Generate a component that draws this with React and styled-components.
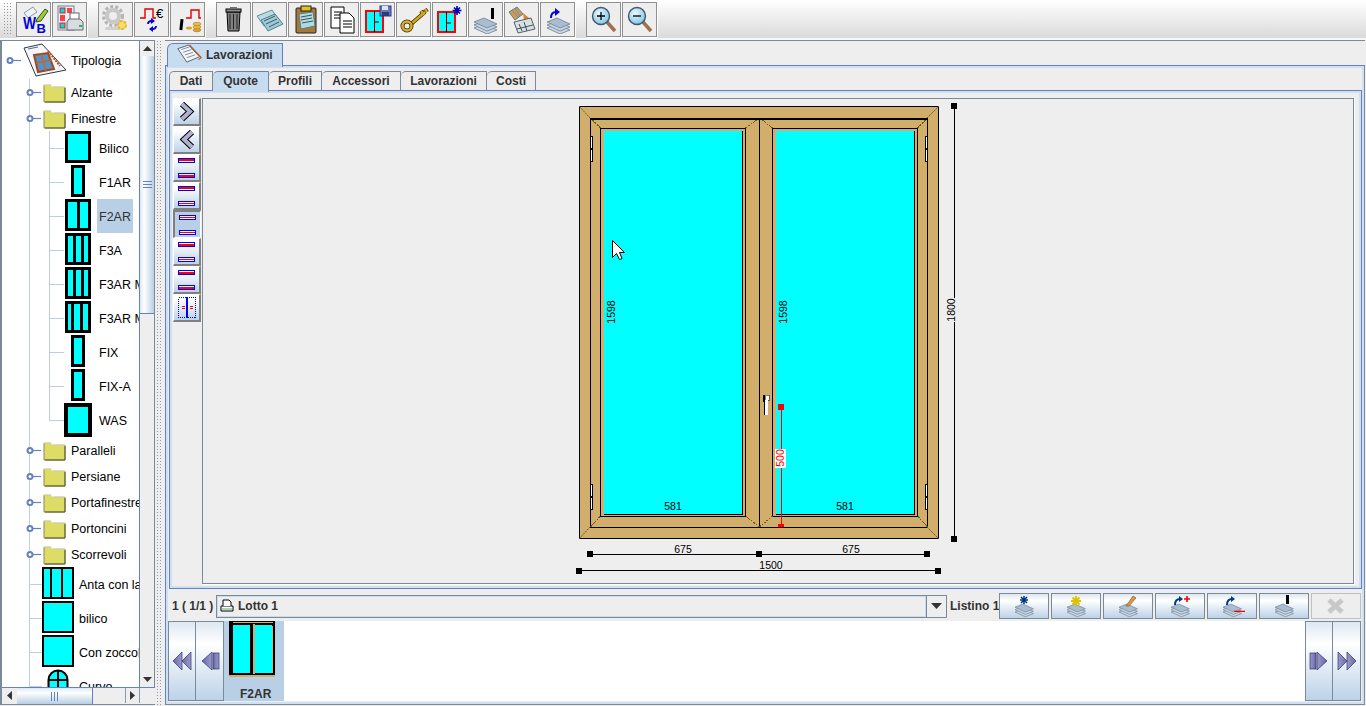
import styled, { createGlobalStyle } from 'styled-components'

const GlobalStyle = createGlobalStyle`
	html, body { margin: 0; padding: 0; background: #eeeeee; }
	body { font-family: "Liberation Sans", Arial, sans-serif; overflow: hidden; }
	svg { display: block; flex: none; }
`

const Page = styled.div`
	width: 1366px;
	height: 706px;
	display: flex;
	flex-direction: column;
	background: #eeeeee;
	overflow: hidden;
`

/* ---------- toolbar ---------- */
const Toolbar = styled.div`
	height: 38px;
	display: flex;
	align-items: center;
	gap: 11px;
	border-bottom: 2px solid #f8f8f8;
	background: linear-gradient(#ffffff, #f2f2f2 35%, #dadada);
`
const Gripper = styled.div`
	width: 9px;
	height: 34px;
	margin: 0 -7px 0 3px;
	background-image: radial-gradient(#9a9a9a 0.7px, transparent 0.9px);
	background-size: 3px 3px;
`
const ToolGroup = styled.div`
	display: flex;
	gap: 1px;
`
const ToolBtn = styled.div`
	width: 33px;
	height: 33px;
	border: 1px solid #8f8f8f;
	box-shadow: 1px 1px 0 #ffffff;
	background: #eeeeee;
	display: flex;
	align-items: center;
	justify-content: center;
`

/* ---------- body ---------- */
const Body = styled.div`
	flex: 1;
	display: flex;
	min-height: 0;
	padding-bottom: 1px;
`
const TreePane = styled.div`
	width: 153px;
	display: flex;
	flex-direction: column;
	border-left: 2px solid #7a8a99;
	border-top: 1px solid #7a8a99;
	border-bottom: 1px solid #7a8a99;
`
const TreeArea = styled.div`
	flex: 1;
	display: flex;
	min-height: 0;
`
const TreeView = styled.div`
	flex: 1;
	position: relative;
	background: #ffffff;
	overflow: hidden;
	min-width: 0;
	&::before {
		content: '';
		position: absolute;
		left: 27px;
		top: 38px;
		bottom: 0;
		width: 1px;
		background: #b8cfe5;
	}
`
const TreeGroup = styled.div`
	position: relative;
	&::before {
		content: '';
		position: absolute;
		left: 47px;
		top: 0;
		bottom: 17px;
		width: 1px;
		background: #b8cfe5;
	}
`
const TreeRow = styled.div`
	position: relative;
	height: ${p => p.$h}px;
	display: flex;
	align-items: center;
	padding-left: ${p => p.$left}px;
	white-space: nowrap;
`
const Branch = styled.span`
	width: ${p => p.$w}px;
	height: 1px;
	flex: none;
	background: #b8cfe5;
`
const IconSlot = styled.span`
	width: ${p => p.$w}px;
	flex: none;
	display: flex;
	justify-content: center;
	align-self: ${p => (p.$top ? 'flex-start' : 'center')};
`
const TreeLabel = styled.span`
	font-size: 12.5px;
	margin-left: ${p => p.$gap}px;
	padding: 0 2px;
	height: ${p => (p.$selected ? 34 : 14)}px;
	line-height: ${p => (p.$selected ? 36 : 16)}px;
	background: ${p => (p.$selected ? '#b8cfe5' : 'transparent')};
	color: ${p => (p.$selected ? '#333333' : '#000000')};
`
const VScroll = styled.div`
	width: 16px;
	box-sizing: border-box;
	flex: none;
	border-left: 1px solid #6382bf;
	border-right: 1px solid #7a8a99;
	display: flex;
	flex-direction: column;
	background: #eeeeee;
`
const ScrollArrow = styled.div`
	width: ${p => p.$w || 15}px;
	height: ${p => p.$h || 15}px;
	flex: none;
	display: flex;
	align-items: center;
	justify-content: center;
	background: #eeeeee;
	border: solid #8a9aa8;
	border-width: ${p => p.$edges || '0'};
	box-sizing: border-box;
`
const VThumb = styled.div`
	height: 258px;
	flex: none;
	box-sizing: border-box;
	border-bottom: 1px solid #6382bf;
	background: linear-gradient(90deg, #dde8f3, #ffffff 30%, #b8cfe5);
	display: flex;
	flex-direction: column;
	justify-content: center;
	gap: 2px;
	align-items: center;
`
const GripLine = styled.span`
	width: 9px;
	height: 1px;
	background: #6382bf;
`
const TrackFill = styled.div`
	flex: 1;
`
const HScroll = styled.div`
	height: 16px;
	flex: none;
	display: flex;
	border-top: 1px solid #6382bf;
	background: #eeeeee;
`
const HThumb = styled.div`
	width: 76px;
	flex: none;
	box-sizing: border-box;
	border-right: 1px solid #6382bf;
	background: linear-gradient(#dde8f3, #ffffff 30%, #b8cfe5);
	display: flex;
	align-items: center;
	justify-content: center;
	gap: 2px;
`
const GripBar = styled.span`
	width: 1px;
	height: 9px;
	background: #6382bf;
`
const Splitter = styled.div`
	width: 10px;
	background-color: #eeeeee;
	background-image: radial-gradient(#9a9a9a 0.7px, transparent 0.9px);
	background-size: 3px 3px;
	background-position: 1px 0;
	background-clip: content-box;
	box-sizing: border-box;
	padding: 0 2px;
`

/* ---------- main ---------- */
const Main = styled.div`
	flex: 1;
	min-width: 0;
	display: flex;
	flex-direction: column;
	border-top: 1px solid #7a8a99;
	margin-right: 1px;
`
const TopTabs = styled.div`
	height: 24px;
	flex: none;
	display: flex;
	align-items: flex-end;
	padding-left: 2px;
	position: relative;
	z-index: 1;
`
const OuterTab = styled.div`
	width: 116px;
	height: 24px;
	margin-bottom: -2px;
	border: 1px solid #6382bf;
	border-bottom: 0;
	border-top-left-radius: 6px;
	background: #c8dcf0;
	display: flex;
	align-items: center;
	gap: 3px;
	padding: 0 0 2px 8px;
	box-sizing: border-box;
	font-size: 12px;
	font-weight: bold;
	color: #333333;
`
const OuterPanel = styled.div`
	flex: 1;
	min-height: 0;
	display: flex;
	flex-direction: column;
	border: 1px solid;
	border-color: #6382bf #7a8a99 #7a8a99 #6382bf;
	box-shadow: inset 0 0 0 2px #d0e0f2;
	padding: 5px 2px 3px 3px;
`
const InnerTabs = styled.div`
	height: 19px;
	flex: none;
	display: flex;
	position: relative;
	z-index: 1;
`
const InnerTab = styled.div`
	width: ${p => p.$w}px;
	height: ${p => (p.$active ? 21 : 19)}px;
	box-sizing: border-box;
	border: 1px solid #7a8a99;
	border-bottom: 0;
	border-left-width: ${p => (p.$first ? 1 : 0)}px;
	border-top-left-radius: 5px;
	background: ${p => (p.$active ? '#c8dcf0' : '#eeeeee')};
	border-top-color: ${p => (p.$active ? '#6382bf' : '#7a8a99')};
	padding-bottom: ${p => (p.$active ? 2 : 0)}px;
	display: flex;
	align-items: center;
	justify-content: center;
	font-size: 12px;
	font-weight: bold;
	color: #333333;
`
const InnerPanel = styled.div`
	flex: 1;
	min-height: 0;
	display: flex;
	gap: 1px;
	border: 1px solid #6382bf;
	box-shadow: inset 0 0 0 2px #d0e0f2;
	padding: 7px 7px 4px 3px;
`
const SideBar = styled.div`
	width: 28px;
	flex: none;
	display: flex;
	flex-direction: column;
`
const SideBtn = styled.div`
	height: 28px;
	flex: none;
	box-sizing: border-box;
	border-style: solid;
	border-width: ${p => (p.$active ? '2px 1px 1px 2px' : '1px 2px 2px 1px')};
	border-color: ${p => (p.$active
		? '#808080 #ffffff #ffffff #808080'
		: '#ffffff #808080 #808080 #ffffff')};
	background: ${p => (p.$active ? '#b8cfe5' : 'linear-gradient(#ffffff 15%, #bcd2e8)')};
	display: flex;
	align-items: center;
	justify-content: center;
`
const Canvas = styled.div`
	flex: 1;
	min-width: 0;
	border: 1px solid #7a8a99;
	box-shadow: 1px 1px 0 #ffffff;
	background: #eeeeee;
	overflow: hidden;
`
const BottomBar = styled.div`
	height: 28px;
	flex: none;
	margin-top: 3px;
	display: flex;
	align-items: center;
	font-size: 12px;
	font-weight: bold;
	color: #333333;
`
const Counter = styled.span`
	width: 44px;
	padding-left: 3px;
	flex: none;
	white-space: pre;
`
const Combo = styled.div`
	flex: 1;
	height: 23px;
	display: flex;
	align-items: center;
	border: 1px solid #7a8a99;
	box-shadow: inset 1px 1px 0 #c8dcf0, inset -1px -1px 0 #c8dcf0;
	box-sizing: border-box;
	padding-left: 3px;
	gap: 4px;
`
const ComboText = styled.span`
	flex: 1;
`
const ComboArrow = styled.div`
	width: 20px;
	height: 23px;
	flex: none;
	box-sizing: border-box;
	border: 1px solid #7a8a99;
	border-left: 0;
	background: #eeeeee;
	display: flex;
	align-items: center;
	justify-content: center;
`
const PriceLabel = styled.span`
	width: 49px;
	margin-left: 3px;
	flex: none;
	white-space: nowrap;
`
const ActionRow = styled.div`
	display: flex;
	gap: 2px;
	padding-right: 1px;
	flex: none;
`
const ActionBtn = styled.div`
	width: 50px;
	height: 26px;
	box-sizing: border-box;
	border: 1px solid ${p => (p.$off ? '#c0c0c0' : '#7a8a99')};
	background: ${p => (p.$off ? '#eeeeee' : 'linear-gradient(#dde8f3, #ffffff 28%, #bcd2e8)')};
	display: flex;
	align-items: center;
	justify-content: center;
`
const Strip = styled.div`
	height: 80px;
	flex: none;
	margin: 1px 1px 0 -1px;
	display: flex;
	background: #ffffff;
`
const NavBtn = styled.div`
	width: 28px;
	flex: none;
	box-sizing: border-box;
	border: 1px solid #7a8a99;
	border-left-width: ${p => (p.$joined ? 0 : 1)}px;
	background: linear-gradient(#dde8f3, #ffffff 28%, #bcd2e8);
	display: flex;
	align-items: center;
	justify-content: center;
`
const Tile = styled.div`
	width: 60px;
	box-sizing: border-box;
	padding-left: 5px;
	background: #b8cfe5;
	display: flex;
	flex-direction: column;
	align-items: flex-start;
	font-size: 12px;
	font-weight: bold;
	color: #333333;
`
const TileLabel = styled.span`
	margin: 10px 0 0 11px;
`
const StripFill = styled.div`
	flex: 1;
`

/* ---------- drawings ---------- */
const Step = ({ x, y, c = '#ff0000', s = 1 }) => (
	<path d={`M${x} ${y + 8 * s}H${x + 4 * s}V${y}H${x + 10 * s}V${y + 8 * s}H${x + 7 * s}`} fill="none" stroke={c} strokeWidth="1.4" />
)

const Layers = ({ x = 0, y = 0, n = 3, s = 1 }) => (
	<g transform={`translate(${x} ${y}) scale(${s})`}>
		{[...Array(n).keys()].reverse().map(i => (
			<path key={i} d={`M0 ${4 + i * 3}L10 ${i * 3}L23 ${6 + i * 3}L13 ${10 + i * 3}Z`} fill={i === 0 ? '#a8bdd2' : '#c6d6e4'} stroke="#6f7f90" strokeWidth="0.8" />
		))}
	</g>
)

const Svg30 = ({ children }) => <svg width="30" height="30" viewBox="0 0 30 30">{children}</svg>

const LensDefs = () => (
	<defs>
		<radialGradient id="lens" cx="0.4" cy="0.35" r="0.7">
			<stop offset="0" stopColor="#e8f8ff" />
			<stop offset="1" stopColor="#7cc4e4" />
		</radialGradient>
	</defs>
)

const toolIcons = [
	<Svg30>
		<path d="M5 9L14 3l4 5-9 6Z" fill="#eef2f5" stroke="#8a9aa8" />
		<path d="M18 15L26 5l3 2-7 10-5 1Z" fill="#9acd32" stroke="#222" strokeWidth="0.8" />
		<text x="4" y="25" fontSize="17" fontWeight="bold" fill="#0000e0" fontFamily="Liberation Sans" textLength="13" lengthAdjust="spacingAndGlyphs">W</text>
		<text x="17.5" y="29" fontSize="13" fontWeight="bold" fill="#0000e0" fontFamily="Liberation Sans">B</text>
	</Svg30>,
	<Svg30>
		<rect x="3" y="2" width="16" height="24" fill="#e8f0f8" stroke="#7080a0" />
		<rect x="5" y="4" width="5" height="5" fill="#00dddd" stroke="#d02020" />
		<rect x="12" y="4" width="5" height="5" fill="#ff4040" />
		<rect x="5" y="11" width="5" height="6" fill="#ff4040" />
		<rect x="5" y="19" width="5" height="5" fill="#00dddd" stroke="#d02020" />
		<rect x="15" y="9" width="9" height="7" fill="#fff" stroke="#606870" />
		<path d="M14 15h11l3 3v8H12v-8Z" fill="#d8dce0" stroke="#606870" />
		<rect x="24" y="21" width="3" height="2" fill="#20c040" />
	</Svg30>,
	<Svg30>
		<circle cx="12" cy="12" r="6" fill="none" stroke="#c8c8c8" strokeWidth="4" />
		<circle cx="12" cy="12" r="9.5" fill="none" stroke="#b4b4b4" strokeWidth="3" strokeDasharray="3 2.2" />
		<rect x="4" y="23" width="16" height="3" rx="1.5" fill="#d0d0d0" />
		<circle cx="21" cy="21" r="4" fill="#f4e070" stroke="#e8b830" strokeWidth="2" strokeDasharray="3 1" />
	</Svg30>,
	<Svg30>
		<path d="M3 14H8V5H16V14H19" fill="none" stroke="#e00000" strokeWidth="1.4" />
		<text x="19" y="14" fontSize="13" fontFamily="Liberation Sans" fill="#000">€</text>
		<path d="M11 20c0-2 2-3 4-3" fill="none" stroke="#0000e0" strokeWidth="1.8" />
		<path d="M14 14l4 3-4 3Z" fill="#0000e0" />
		<path d="M19 22c0 2-2 3-4 3" fill="none" stroke="#0000e0" strokeWidth="1.8" />
		<path d="M16 22l-4 3 4 3Z" fill="#0000e0" />
	</Svg30>,
	<Svg30>
		<path d="M13 14H18V6H26V14H28" fill="none" stroke="#e00000" strokeWidth="1.4" />
		<rect x="7" y="15" width="3" height="11" fill="#000" transform="rotate(6 8 20)" />
		<ellipse cx="16" cy="24" rx="3" ry="1.5" fill="#e0a030" />
		<ellipse cx="24" cy="26" rx="4" ry="1.8" fill="#e0a030" stroke="#a07020" strokeWidth="0.5" />
		<ellipse cx="24" cy="23" rx="4" ry="1.8" fill="#e8b840" stroke="#a07020" strokeWidth="0.5" />
		<ellipse cx="24" cy="20" rx="4" ry="1.8" fill="#e8b840" stroke="#a07020" strokeWidth="0.5" />
	</Svg30>,
	<Svg30>
		<path d="M8 8h13l-1 19H9Z" fill="#808080" stroke="#000" />
		<path d="M11 10v15M14.500 10v15M18 10v15" stroke="#222" />
		<rect x="7" y="5" width="15" height="3" fill="#909090" stroke="#000" />
		<rect x="11" y="3" width="7" height="2" fill="#707070" />
	</Svg30>,
	<Svg30>
		<path d="M2 12L17 6l6 9-14 7Z" fill="#b8dce0" stroke="#6090a0" />
		<path d="M6 16L20 10l8 10-15 7Z" fill="#9ccbd4" stroke="#508090" />
		<path d="M9 17l11-5M11 20l11-5M14 23l10-5" stroke="#405868" />
	</Svg30>,
	<Svg30>
		<rect x="5" y="4" width="20" height="25" rx="1" fill="#a87838" stroke="#222" />
		<rect x="10" y="2" width="10" height="5" fill="#e8c020" stroke="#222" />
		<path d="M8 10L22 8l2 14-14 3Z" fill="#b0dce0" stroke="#508090" />
		<path d="M10 13l11-2M10 16l11-2M11 19l11-2" stroke="#405060" />
	</Svg30>,
	<Svg30>
		<path d="M4 3h13v21H4Z" fill="#fff" stroke="#000" />
		<path d="M7 8h8M7 11h8M7 14h8" stroke="#000" />
		<path d="M13 9h9l5 5v15H13Z" fill="#fff" stroke="#000" />
		<path d="M16 17h9M16 20h9M16 23h9" stroke="#000" />
	</Svg30>,
	<Svg30>
		<rect x="3" y="7" width="17" height="21" fill="#00ffff" stroke="#ff0000" strokeWidth="2" />
		<path d="M11.500 7v21M12 18h4" stroke="#000" />
		<rect x="17" y="2" width="11" height="10" fill="#6a78c0" stroke="#303880" />
		<rect x="19" y="2" width="6" height="4" fill="#dfe4f2" />
		<rect x="19" y="8" width="7" height="4" fill="#303880" />
	</Svg30>,
	<Svg30>
		<path d="M12 20L26 8M22 7l3 4M26 5l2 3" stroke="#403000" strokeWidth="4" />
		<path d="M12 20L26 8M22 7l3 4M26 5l2 3" stroke="#d0a820" strokeWidth="2.4" />
		<circle cx="8" cy="22" r="4.5" fill="none" stroke="#403000" strokeWidth="4" />
		<circle cx="8" cy="22" r="4.5" fill="none" stroke="#d8b030" strokeWidth="2.4" />
	</Svg30>,
	<Svg30>
		<rect x="3" y="8" width="17" height="20" fill="#00ffff" stroke="#ff0000" strokeWidth="2" />
		<path d="M11.500 8v20M12 19h4" stroke="#000" />
		<path d="M22 2v9M17.500 6.500h9M19 3.500l6 6M25 3.500l-6 6" stroke="#0000c0" strokeWidth="1.6" />
	</Svg30>,
	<Svg30>
		<Layers x="3" y="14" />
		<Step x="5" y="5" />
		<rect x="20" y="4" width="3" height="11" fill="#000" />
	</Svg30>,
	<Svg30>
		<path d="M2 8L10 3l6 7-8 6Z" fill="#d89848" stroke="#5080a0" />
		<path d="M5 6l6 7M8 4l5 8" stroke="#6090c0" />
		<path d="M16 9l6 5-5 2Z" fill="#e08020" />
		<path d="M7 18L24 14l4 11-17 4Z" fill="#d8e0e0" stroke="#506070" />
		<path d="M12 20l3 7M17 18l3 9M10 25l16-4" stroke="#405060" />
	</Svg30>,
	<Svg30>
		<Layers x="4" y="14" />
		<path d="M8 14c0-4 2-6 5-6" fill="none" stroke="#0000e0" strokeWidth="2" />
		<path d="M12 4l5 4-5 4Z" fill="#0000e0" />
		<Step x="18" y="4" s={0.8} />
	</Svg30>,
	<Svg30>
		<LensDefs />
		<path d="M18 18l8 9" stroke="#a07050" strokeWidth="3.500" />
		<circle cx="12" cy="12" r="8.500" fill="url(#lens)" stroke="#405868" strokeWidth="1.400" />
		<path d="M8 12h8M12 8v8" stroke="#000" strokeWidth="1.300" />
	</Svg30>,
	<Svg30>
		<path d="M18 18l8 9" stroke="#a07050" strokeWidth="3.500" />
		<circle cx="12" cy="12" r="8.500" fill="url(#lens)" stroke="#405868" strokeWidth="1.400" />
		<path d="M8 12h8" stroke="#000" strokeWidth="1.300" />
	</Svg30>,
]

const Knob = () => (
	<svg width="15" height="9" viewBox="0 0 15 9">
		<circle cx="4" cy="4.5" r="2.5" fill="#ffffff" stroke="#6382bf" strokeWidth="2" />
		<path d="M7 4.5H15" stroke="#6382bf" strokeWidth="1.2" />
	</svg>
)

const Folder = () => (
	<svg width="23" height="21" viewBox="0 0 23 21">
		<path d="M1 3h7l2 2h12v15H1Z" fill="#dcdc66" stroke="#8a8a50" />
		<path d="M1 3h7l2 2h12" fill="none" stroke="#f4f4c8" />
		<path d="M22 6v14H2" fill="none" stroke="#5a5a28" />
	</svg>
)

const BookIcon = () => (
	<svg width="44" height="34" viewBox="0 0 44 34">
		<path d="M1 5L19 1 43 27 13 33Z" fill="#f4f6fa" stroke="#303848" />
		<path d="M11 12L25 10 31 26 15 29Z" fill="#5890c8" stroke="#a04818" strokeWidth="2" />
		<path d="M18 11l5 17M13 20l16-3" stroke="#c06828" strokeWidth="1.4" />
		<path d="M25 8l12 15" stroke="#c05020" strokeWidth="2" strokeDasharray="2 1" />
		<path d="M5 6l10-2" stroke="#5068a0" />
	</svg>
)

const PaneThumb = ({ w, h, b = 3, bars = [] }) => (
	<svg width={w} height={h} viewBox={`0 0 ${w} ${h}`} shapeRendering="crispEdges">
		<rect width={w} height={h} fill="#000" />
		<rect x={b} y={b} width={w - 2 * b} height={h - 2 * b} fill="#00ffff" />
		{bars.map(x => <rect key={x} x={x} y="0" width={b} height={h} fill="#000" />)}
	</svg>
)

const ArchThumb = () => (
	<svg width="22" height="34" viewBox="0 0 22 34">
		<path d="M1.5 33V11a9.5 9.5 0 0 1 19 0V33Z" fill="#00ffff" stroke="#000" strokeWidth="2" />
		<path d="M2 11H20M11 2V33" stroke="#000" strokeWidth="2" />
	</svg>
)

const NodeLeaf = ({ thumb, label, selected, deep }) => (
	<TreeRow $h={34} $left={deep ? 47 : 27}>
		<Branch $w={deep ? 15 : 13} />
		<IconSlot $top $w={deep ? 28 : 32}>{thumb}</IconSlot>
		<TreeLabel $gap={deep ? 5 : 3} $selected={selected}>{label}</TreeLabel>
	</TreeRow>
)

const NodeFolder = ({ label }) => (
	<TreeRow $h={26} $left={24}>
		<Knob />
		<IconSlot $w={27}><Folder /></IconSlot>
		<TreeLabel $gap={1}>{label}</TreeLabel>
	</TreeRow>
)

const Tri = ({ d, w = 9, h = 5 }) => {
	const pts = {
		up: `0,${h} ${w},${h} ${w / 2},0`,
		down: `0,0 ${w},0 ${w / 2},${h}`,
		left: `${h},0 ${h},${w} 0,${w / 2}`,
		right: `0,0 0,${w} ${h},${w / 2}`,
	}[d]
	const vert = d === 'up' || d === 'down'
	return (
		<svg width={vert ? w : h} height={vert ? h : w}>
			<polygon points={pts} fill="#333333" />
		</svg>
	)
}

const Chevron = ({ flip }) => (
	<svg width="16" height="21" viewBox="0 0 16 21">
		<g transform={flip ? 'matrix(-1 0 0 1 16 0)' : undefined}>
			<polyline points="3,3 11,10.500 3,18" fill="none" stroke="#000" strokeWidth="6" />
			<polyline points="3,3 11,10.500 3,18" fill="none" stroke="#b0b0d0" strokeWidth="4" />
		</g>
	</svg>
)

// a blue sash bar with the red measured edge: at its top, middle or low side
const BarIcon = ({ top, bottom }) => {
	const bar = (y, kind) => (
		<g key={y}>
			<rect x="0" y={y} width="17" height="5" fill="#0000ff" />
			<rect x="1" y={y + 1} width="15" height="3" fill="#eef3f8" />
			{kind === 'top' && <rect x="1" y={y + 1} width="15" height="2" fill="#ff0000" />}
			{kind === 'mid' && <rect x="1" y={y + 2} width="15" height="1" fill="#ff0000" />}
			{kind === 'low' && <rect x="1" y={y + 2} width="15" height="2" fill="#ff0000" />}
		</g>
	)
	return (
		<svg width="17" height="21" viewBox="0 0 17 21" shapeRendering="crispEdges">
			{bar(1, top)}
			{bar(16, bottom)}
		</svg>
	)
}

const SplitIcon = () => (
	<svg width="18" height="21" viewBox="0 0 18 21" shapeRendering="crispEdges">
		<rect x="0.5" y="0.5" width="17" height="20" fill="none" stroke="#0000ff" strokeDasharray="1 1" />
		<rect x="8" y="0" width="2" height="21" fill="#0000ff" />
		<path d="M4 9.500h3M4 11.500h3M12 9.500h3M12 11.500h3" stroke="#ff0000" />
	</svg>
)

const NavDefs = () => (
	<svg width="0" height="0">
		<defs>
			<linearGradient id="navg" x1="0" x2="1">
				<stop offset="0" stopColor="#9a9ad0" />
				<stop offset="1" stopColor="#6a6aa0" />
			</linearGradient>
		</defs>
	</svg>
)

const Pair = ({ flip, bar }) => (
	<svg width="22" height="24" viewBox="0 0 22 24">
		<g transform={flip ? 'matrix(-1 0 0 1 22 0)' : undefined} stroke="#30306a" strokeWidth="0.7" fill="url(#navg)">
			{bar && <rect x="2" y="4" width="6" height="16" />}
			{bar && <polygon points="9,3 19,12 9,21" />}
			{!bar && <polygon points="2,3 11,12 2,21" />}
			{!bar && <polygon points="11,3 20,12 11,21" />}
		</g>
	</svg>
)

const PrinterSmall = () => (
	<svg width="14" height="14" viewBox="0 0 14 14">
		<path d="M1 7h12v5H1Z" fill="#fff" stroke="#000" />
		<path d="M3 7V1h6l2 2v4" fill="#fff" stroke="#000" />
		<path d="M2 10h10" stroke="#60a060" />
	</svg>
)

const ActionIcon = ({ kind }) => (
	<svg width="26" height="22" viewBox="0 0 26 22">
		<Layers x="4" y="9" s={0.8} />
		{kind === 0 && <path d="M13 1v8M9 5h8M10 2l6 6M16 2l-6 6" stroke="#003a80" strokeWidth="1.500" />}
		{kind === 1 && <path d="M13 1v10M8 6h10M9.500 2.500l7 7M16.500 2.500l-7 7" stroke="#e0c000" strokeWidth="2" />}
		{kind === 2 && <path d="M11 11L18 1l3 2-7 8Z" fill="#e09840" stroke="#805020" strokeWidth="0.6" />}
		{kind === 3 && <>
			<path d="M8 10c0-4 2-6 5-6" fill="none" stroke="#003a80" strokeWidth="2" />
			<path d="M12 1l4 3-4 3Z" fill="#003a80" />
			<path d="M17 4h6M20 1v6" stroke="#ff0000" strokeWidth="1.600" />
		</>}
		{kind === 4 && <>
			<path d="M8 10c0-4 2-6 5-6" fill="none" stroke="#003a80" strokeWidth="2" />
			<path d="M12 1l4 3-4 3Z" fill="#003a80" />
			<Step x="15" y="1" s={0.8} />
		</>}
		{kind === 5 && <>
			<Step x="5" y="2" s={0.8} />
			<rect x="15" y="0" width="3" height="9" fill="#000" />
		</>}
	</svg>
)

const OffIcon = () => (
	<svg width="20" height="18" viewBox="0 0 20 18">
		<path d="M3 3L16 15M16 3L3 15" stroke="#c8c8c8" strokeWidth="5" />
	</svg>
)

const StripThumb = () => (
	<svg width="46" height="56" viewBox="0 0 46 56" shapeRendering="crispEdges">
		<rect width="46" height="56" fill="#d2ae6d" />
		<rect x="0" y="0" width="46" height="1" fill="#000" />
		<rect x="0" y="1" width="4" height="54" fill="#000" />
		<rect x="0" y="2" width="46" height="3" fill="#000" />
		<rect x="0" y="52" width="46" height="2" fill="#000" />
		<rect x="21" y="3" width="3" height="50" fill="#000" />
		<rect x="44" y="1" width="2" height="54" fill="#000" />
		<rect x="4" y="4" width="17" height="48" fill="#00ffff" />
		<rect x="26" y="4" width="17" height="48" fill="#00ffff" />
		<rect x="24" y="3" width="2" height="50" fill="#d2ae6d" />
		<rect x="0" y="54" width="46" height="2" fill="#d2ae6d" />
	</svg>
)

const OuterTabIcon = () => (
	<svg width="27" height="21" viewBox="0 0 30 23">
		<path d="M2 5L14 1l12 13-14 6Z" fill="#f2f4f8" stroke="#505868" />
		<path d="M6 6l9-3M8 9l9-3M10 12l9-3M12 15l9-3" stroke="#7088a8" />
		<path d="M15 1l13 14-3 2" fill="none" stroke="#b06030" strokeWidth="1.400" />
	</svg>
)

/* dimensioning of the drawing, in page coordinates */
const Handle = ({ x, y, c = '#000' }) => <rect x={x - 3} y={y - 3} width="6" height="6" fill={c} />

const Dim = ({ x, y, children }) => (
	<text x={x} y={y} fontSize="10.5" textAnchor="middle" fontFamily="Liberation Sans" fill="#000">{children}</text>
)
const DimV = ({ x, y, children, c = '#000' }) => (
	<text x={x} y={y} fontSize="10.5" textAnchor="middle" fontFamily="Liberation Sans" fill={c} transform={`rotate(-90 ${x} ${y})`}>{children}</text>
)

const Sash = ({ x1, x2, cx1, cx2, bx1, bx2 }) => (
	<g>
		<rect x={x1} y="118" width={x2 - x1} height="409" fill="#d2ae6d" stroke="#000" />
		<rect x={bx1} y="128" width={bx2 - bx1} height="388" fill="#d2ae6d" stroke="#000" />
		<rect x={cx1} y="131" width={cx2 - cx1} height="383" fill="#00ffff" />
		<path d={`M${cx2 + 0.5} 131V514.5H${cx1}`} fill="none" stroke="#000" />
		<path d={`M${x1} 118L${bx1} 128M${x2} 118L${bx2} 128M${x1} 527L${bx1} 516M${x2} 527L${bx2} 516`} stroke="#6b5a10" strokeDasharray="2 1" />
	</g>
)

const Hinge = ({ x, y }) => (
	<g shapeRendering="crispEdges">
		<rect x={x + 0.5} y={y + 0.5} width="2" height="12" fill="#fff" stroke="#000" />
		<rect x={x + 0.5} y={y + 13.5} width="2" height="12" fill="#fff" stroke="#000" />
	</g>
)

const WindowDrawing = () => (
	<svg width="1151" height="484" viewBox="203 99 1151 484">
		<g shapeRendering="crispEdges">
			<rect x="579.5" y="106.5" width="359" height="432" fill="#d2ae6d" stroke="#000" />
			<Sash x1={590.5} x2={759.5} cx1={604} cx2={742} bx1={600.5} bx2={745.5} />
			<Sash x1={759.5} x2={927.5} cx1={776} cx2={914} bx1={772.5} bx2={917.5} />
			<rect x="590" y="118" width="338" height="2" fill="#000" />
		</g>
		<path d="M579 106L590 118M939 106L927 118M579 539L590 527M939 539L927 527" stroke="#6b5a10" strokeDasharray="2 1" />
		<Hinge x={590} y={136} />
		<Hinge x={590} y={484} />
		<Hinge x={925} y={136} />
		<Hinge x={925} y={484} />

		<g shapeRendering="crispEdges">
			<rect x="763" y="395" width="3" height="7" fill="#000" />
			<rect x="765" y="395" width="4" height="5" fill="#fff" stroke="#000" strokeWidth="0.5" />
			<rect x="764" y="400" width="4" height="15" fill="#fff" />
			<rect x="764" y="400" width="1" height="15" fill="#000" />

			<rect x="781" y="407" width="1" height="118" fill="#ff0000" />
			<Handle x={781} y={407} c="#ff0000" />
			<rect x="778" y="524" width="6" height="3" fill="#ff0000" />
			<rect x="775" y="449" width="11" height="19" fill="#ffffff" />

			<rect x="954" y="106" width="1" height="433" fill="#000" />
			<Handle x={954} y={106} />
			<Handle x={954} y={539} />
			<rect x="946" y="298" width="11" height="24" fill="#eeeeee" />

			<rect x="590" y="554" width="337" height="1" fill="#000" />
			<Handle x={590} y={554} />
			<Handle x={759} y={554} />
			<Handle x={927} y={554} />
			<rect x="579" y="570" width="359" height="1" fill="#000" />
			<Handle x={579} y={571} />
			<Handle x={938} y={571} />
		</g>

		<DimV x={615} y={312}>1598</DimV>
		<DimV x={787} y={312}>1598</DimV>
		<DimV x={955} y={310}>1800</DimV>
		<DimV x={784} y={458} c="#ff0000">500</DimV>
		<Dim x={673} y={510}>581</Dim>
		<Dim x={845} y={510}>581</Dim>
		<Dim x={683} y={553}>675</Dim>
		<Dim x={851} y={553}>675</Dim>
		<Dim x={771} y={569}>1500</Dim>

		<polygon points="612.5,240.5 612.5,257.5 616.5,253.5 619.5,259.5 622,258.5 619.5,252.5 624.5,252.5" fill="#fff" stroke="#000" />
	</svg>
)

const tabs = [
	['Dati', 44], ['Quote', 56], ['Profili', 53], ['Accessori', 79], ['Lavorazioni', 86], ['Costi', 49],
]

const sideBars = [['top', 'low'], ['top', 'mid'], ['mid', 'mid'], ['low', 'mid'], ['low', 'low']]

function App() {
	return (
		<Page>
			<GlobalStyle />
			<NavDefs />
			<Toolbar>
				<Gripper />
				<ToolGroup>{toolIcons.slice(0, 2).map((ic, i) => <ToolBtn key={i}>{ic}</ToolBtn>)}</ToolGroup>
				<ToolGroup>{toolIcons.slice(2, 5).map((ic, i) => <ToolBtn key={i}>{ic}</ToolBtn>)}</ToolGroup>
				<ToolGroup>{toolIcons.slice(5, 15).map((ic, i) => <ToolBtn key={i}>{ic}</ToolBtn>)}</ToolGroup>
				<ToolGroup>{toolIcons.slice(15).map((ic, i) => <ToolBtn key={i}>{ic}</ToolBtn>)}</ToolGroup>
			</Toolbar>
			<Body>
				<TreePane>
					<TreeArea>
						<TreeView>
							<TreeRow $h={38} $left={4}>
								<Knob />
								<IconSlot $w={48}><BookIcon /></IconSlot>
								<TreeLabel $gap={0}>Tipologia</TreeLabel>
							</TreeRow>
							<NodeFolder label="Alzante" />
							<NodeFolder label="Finestre" />
							<TreeGroup>
								<NodeLeaf deep label="Bilico" thumb={<PaneThumb w={26} h={32} />} />
								<NodeLeaf deep label="F1AR" thumb={<PaneThumb w={14} h={32} />} />
								<NodeLeaf deep selected label="F2AR" thumb={<PaneThumb w={26} h={32} bars={[12]} />} />
								<NodeLeaf deep label="F3A" thumb={<PaneThumb w={26} h={32} bars={[8, 16]} />} />
								<NodeLeaf deep label="F3AR M" thumb={<PaneThumb w={26} h={32} bars={[8, 16]} />} />
								<NodeLeaf deep label="F3AR M" thumb={<PaneThumb w={26} h={32} bars={[6, 15]} />} />
								<NodeLeaf deep label="FIX" thumb={<PaneThumb w={14} h={32} />} />
								<NodeLeaf deep label="FIX-A" thumb={<PaneThumb w={14} h={32} />} />
								<NodeLeaf deep label="WAS" thumb={<PaneThumb w={28} h={34} b={4} />} />
							</TreeGroup>
							<NodeFolder label="Paralleli" />
							<NodeFolder label="Persiane" />
							<NodeFolder label="Portafinestre" />
							<NodeFolder label="Portoncini" />
							<NodeFolder label="Scorrevoli" />
							<NodeLeaf label="Anta con lamelle" thumb={<PaneThumb w={32} h={32} b={2} bars={[8, 19]} />} />
							<NodeLeaf label="bilico" thumb={<PaneThumb w={32} h={32} b={2} />} />
							<NodeLeaf label="Con zoccolo" thumb={<PaneThumb w={32} h={32} b={2} />} />
							<NodeLeaf label="Curvo" thumb={<ArchThumb />} />
						</TreeView>
						<VScroll>
							<ScrollArrow $w={14}><Tri d="up" /></ScrollArrow>
							<VThumb><GripLine /><GripLine /><GripLine /></VThumb>
							<TrackFill />
							<ScrollArrow $w={14}><Tri d="down" /></ScrollArrow>
						</VScroll>
					</TreeArea>
					<HScroll>
						<ScrollArrow $h={15}><Tri d="left" /></ScrollArrow>
						<HThumb><GripBar /><GripBar /><GripBar /></HThumb>
						<TrackFill />
						<ScrollArrow $h={15} $edges="0 1px 0 1px"><Tri d="right" /></ScrollArrow>
						<ScrollArrow $h={15} />
					</HScroll>
				</TreePane>
				<Splitter />
				<Main>
					<TopTabs>
						<OuterTab><OuterTabIcon />Lavorazioni</OuterTab>
					</TopTabs>
					<OuterPanel>
						<InnerTabs>
							{tabs.map(([name, w], i) => (
								<InnerTab key={name} $w={w} $first={i === 0} $active={name === 'Quote'}>{name}</InnerTab>
							))}
						</InnerTabs>
						<InnerPanel>
							<SideBar>
								<SideBtn><Chevron /></SideBtn>
								<SideBtn><Chevron flip /></SideBtn>
								{sideBars.map(([t, b], i) => (
									<SideBtn key={i} $active={i === 2}><BarIcon top={t} bottom={b} /></SideBtn>
								))}
								<SideBtn><SplitIcon /></SideBtn>
							</SideBar>
							<Canvas><WindowDrawing /></Canvas>
						</InnerPanel>
						<BottomBar>
							<Counter>1 ( 1/1 )</Counter>
							<Combo><PrinterSmall /><ComboText>Lotto 1</ComboText></Combo>
							<ComboArrow><Tri d="down" w={11} h={6} /></ComboArrow>
							<PriceLabel>Listino 1</PriceLabel>
							<ActionRow>
								{[0, 1, 2, 3, 4, 5].map(k => <ActionBtn key={k}><ActionIcon kind={k} /></ActionBtn>)}
								<ActionBtn $off><OffIcon /></ActionBtn>
							</ActionRow>
						</BottomBar>
						<Strip>
							<NavBtn><Pair flip /></NavBtn>
							<NavBtn $joined><Pair flip bar /></NavBtn>
							<Tile>
								<StripThumb />
								<TileLabel>F2AR</TileLabel>
							</Tile>
							<StripFill />
							<NavBtn><Pair bar /></NavBtn>
							<NavBtn $joined><Pair /></NavBtn>
						</Strip>
					</OuterPanel>
				</Main>
			</Body>
		</Page>
	)
}

export default App
